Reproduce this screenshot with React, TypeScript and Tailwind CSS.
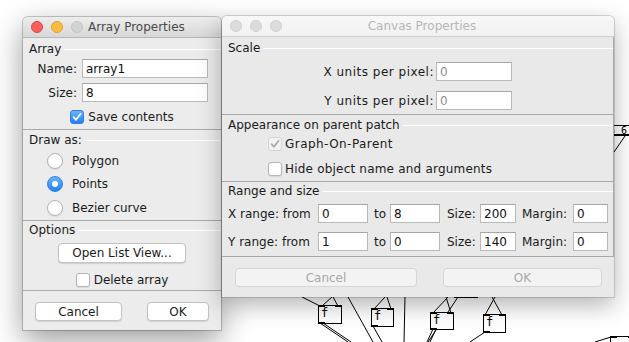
import React from "react";

const check = (color: string) => (
  <svg width="10" height="10" viewBox="0 0 10 10">
    <path d="M1.6 5.2 L4 7.8 L8.6 1.8" fill="none" stroke={color} strokeWidth="1.7" strokeLinecap="round" strokeLinejoin="round" />
  </svg>
);

function Checkbox({ state }: { state: "on" | "off" | "disabled" }) {
  if (state === "on")
    return (
      <span className="flex h-[14px] w-[14px] items-center justify-center rounded-[3px] border border-[#2f80e6] bg-gradient-to-b from-[#6ab3fb] to-[#1c7ff4]">
        {check("#ffffff")}
      </span>
    );
  if (state === "disabled")
    return (
      <span className="flex h-[14px] w-[14px] items-center justify-center rounded-[3px] border border-[#d2d2d2] bg-[#f3f3f3]">
        {check("#a9a9a9")}
      </span>
    );
  return <span className="h-[14px] w-[14px] rounded-[3px] border border-[#b4b4b4] bg-white shadow-[0_1px_1px_rgba(0,0,0,0.08)]" />;
}

function Radio({ on }: { on?: boolean }) {
  if (on)
    return (
      <span className="flex h-[16px] w-[16px] items-center justify-center rounded-full border border-[#2f80e6] bg-gradient-to-b from-[#6ab3fb] to-[#1c7ff4]">
        <span className="h-[6px] w-[6px] rounded-full bg-white" />
      </span>
    );
  return <span className="h-[16px] w-[16px] rounded-full border border-[#b4b4b4] bg-white shadow-[0_1px_1px_rgba(0,0,0,0.08)]" />;
}

function Field({ value, w, dim }: { value: string; w: string; dim?: boolean }) {
  return (
    <input
      readOnly
      value={value}
      className={`h-[19px] ${w} border border-[#b9b9b9] border-t-[#a6a6a6] bg-white pl-[3px] text-[12px] outline-none ${dim ? "text-[#8e8e8e]" : "text-[#111]"}`}
    />
  );
}

function Lights({ active }: { active?: boolean }) {
  if (active)
    return (
      <div className="flex gap-[8px]">
        <span className="h-[12px] w-[12px] rounded-full border border-[#e0443e] bg-[#fc605c]" />
        <span className="h-[12px] w-[12px] rounded-full border border-[#dea123] bg-[#fdbc40]" />
        <span className="h-[12px] w-[12px] rounded-full border border-[#c4c4c4] bg-[#d3d3d3]" />
      </div>
    );
  return (
    <div className="flex gap-[8px]">
      <span className="h-[12px] w-[12px] rounded-full border border-[#d0d0d0] bg-[#dcdcdc]" />
      <span className="h-[12px] w-[12px] rounded-full border border-[#d0d0d0] bg-[#dcdcdc]" />
      <span className="h-[12px] w-[12px] rounded-full border border-[#d0d0d0] bg-[#dcdcdc]" />
    </div>
  );
}

function Header({ label }: { label: string }) {
  return (
    <div className="flex h-[18px] items-center">
      <span className="whitespace-nowrap pl-[6px] pr-[3px] text-[12px] text-[#1b1b1b]">{label}</span>
      <div className="h-px flex-1 bg-white" />
    </div>
  );
}

function Button({ label, w, disabled }: { label: string; w: string; disabled?: boolean }) {
  return (
    <div
      className={`flex h-[19px] ${w} items-center justify-center rounded-[4px] border text-[12px] ${
        disabled
          ? "border-[#d6d6d6] bg-[#f3f3f3] text-[#a8a8a8]"
          : "border-[#c3c3c3] bg-white text-[#1b1b1b] shadow-[0_1px_1px_rgba(0,0,0,0.12)]"
      }`}
    >
      {label}
    </div>
  );
}

function ArrayWindow() {
  return (
    <div className="absolute left-[23px] top-[17px] flex h-[313px] w-[198px] flex-col rounded-t-[5px] bg-[#ececec] text-[12px] text-[#1b1b1b] shadow-[0_10px_30px_rgba(0,0,0,0.4)] ring-1 ring-black/20">
      <div className="flex h-[21px] shrink-0 items-center rounded-t-[5px] border-b border-[#b6b6b6] bg-gradient-to-b from-[#ededed] to-[#d8d8d8] pl-[8px]">
        <Lights active />
        <span className="ml-[5px] text-[12px] text-[#4a4a4a]">Array Properties</span>
      </div>

      <div className="border-b border-[#a9a9a9] pt-[2px] pb-[5px]">
        <Header label="Array" />
        <div className="mt-[1px] flex items-center">
          <span className="w-[54px] text-right">Name:</span>
          <div className="ml-[5px]">
            <Field value="array1" w="w-[126px]" />
          </div>
        </div>
        <div className="mt-[5px] flex items-center">
          <span className="w-[54px] text-right">Size:</span>
          <div className="ml-[5px]">
            <Field value="8" w="w-[126px]" />
          </div>
        </div>
        <div className="mt-[8px] flex h-[14px] items-center justify-center gap-[4px]">
          <Checkbox state="on" />
          <span>Save contents</span>
        </div>
      </div>

      <div className="border-b border-[#a9a9a9] pt-[1px] pb-[4px]">
        <Header label="Draw as:" />
        <div className="mt-[4px] flex h-[16px] items-center gap-[9px] pl-[24px]">
          <Radio />
          <span>Polygon</span>
        </div>
        <div className="mt-[7px] flex h-[16px] items-center gap-[9px] pl-[24px]">
          <Radio on />
          <span>Points</span>
        </div>
        <div className="mt-[8px] flex h-[16px] items-center gap-[9px] pl-[24px]">
          <Radio />
          <span>Bezier curve</span>
        </div>
      </div>

      <div className="border-b border-[#a9a9a9] pb-[3px]">
        <Header label="Options" />
        <div className="mt-[4px] flex justify-center">
          <div className="flex h-[20px] w-[128px] items-center justify-center rounded-[4px] border border-[#c3c3c3] bg-white shadow-[0_1px_1px_rgba(0,0,0,0.12)]">
            Open List View...
          </div>
        </div>
        <div className="mt-[10px] flex h-[14px] items-center justify-center gap-[4px]">
          <Checkbox state="off" />
          <span>Delete array</span>
        </div>
      </div>

      <div className="flex justify-between px-[12px] pt-[11px]">
        <Button label="Cancel" w="w-[87px]" />
        <Button label="OK" w="w-[62px]" />
      </div>
    </div>
  );
}

function RangeRow({ axis, from, to, size }: { axis: string; from: string; to: string; size: string }) {
  return (
    <div className="flex h-[19px] items-center whitespace-nowrap pl-[6px]">
      <span className="w-[90px]">{axis} range: from</span>
      <Field value={from} w="w-[50px]" />
      <span className="w-[22px] pl-[6px]">to</span>
      <Field value={to} w="w-[50px]" />
      <span className="w-[40px] pl-[7px]">Size:</span>
      <Field value={size} w="w-[36px]" />
      <span className="w-[57px] pl-[6px]">Margin:</span>
      <Field value="0" w="w-[35px]" />
    </div>
  );
}

function CanvasWindow() {
  return (
    <div className="absolute left-[222px] top-[16px] flex h-[281px] w-[392px] flex-col rounded-t-[5px] bg-[#e9e9e9] text-[12px] text-[#1b1b1b] shadow-[0_8px_24px_rgba(0,0,0,0.3)] ring-1 ring-black/15">
      <div className="grid h-[21px] shrink-0 grid-cols-[1fr_auto_1fr] items-center rounded-t-[5px] border-b border-[#d0d0d0] bg-gradient-to-b from-[#f8f8f8] to-[#f1f1f1] pl-[8px]">
        <Lights />
        <span className="text-[12px] text-[#b7b7b7]">Canvas Properties</span>
        <span />
      </div>

      <div className="border-b border-r border-[#a9a9a9] pt-[2px] pb-[4px]">
        <Header label="Scale" />
        <div className="mt-[5px] flex items-center pl-[98px]">
          <span className="w-[114px] text-right tracking-[0.5px]">X units per pixel:</span>
          <div className="ml-[2px]">
            <Field value="0" w="w-[76px]" dim />
          </div>
        </div>
        <div className="mt-[10px] flex items-center pl-[98px]">
          <span className="w-[114px] text-right tracking-[0.5px]">Y units per pixel:</span>
          <div className="ml-[2px]">
            <Field value="0" w="w-[76px]" dim />
          </div>
        </div>
      </div>

      <div className="border-b border-r border-[#a9a9a9] pt-[1px] pb-[5px]">
        <Header label="Appearance on parent patch" />
        <div className="mt-[3px] flex h-[14px] items-center gap-[3px] pl-[46px]">
          <Checkbox state="disabled" />
          <span className="tracking-[0.45px]">Graph-On-Parent</span>
        </div>
        <div className="mt-[11px] flex h-[14px] items-center gap-[3px] pl-[46px]">
          <Checkbox state="off" />
          <span className="tracking-[0.2px]">Hide object name and arguments</span>
        </div>
      </div>

      <div className="border-b border-r border-[#a9a9a9] pb-[5px]">
        <Header label="Range and size" />
        <div className="mt-[4px]">
          <RangeRow axis="X" from="0" to="8" size="200" />
        </div>
        <div className="mt-[9px]">
          <RangeRow axis="Y" from="1" to="0" size="140" />
        </div>
      </div>

      <div className="flex justify-between pl-[13px] pr-[12px] pt-[11px]">
        <Button label="Cancel" w="w-[182px]" disabled />
        <Button label="OK" w="w-[159px]" disabled />
      </div>
    </div>
  );
}

const boxes = [
  { x: 318, y: 305, w: 23, h: 18, t: "f" },
  { x: 371, y: 308, w: 22, h: 18, t: "f" },
  { x: 430, y: 312, w: 23, h: 17, t: "f" },
  { x: 483, y: 314, w: 22, h: 18, t: "f" },
  { x: 454, y: 280, w: 23, h: 17, t: "" },
  { x: 610, y: 336, w: 24, h: 18, t: "" },
];

const wires = [
  [302, 297, 320, 306],
  [332, 297, 322, 306],
  [333, 297, 338, 306],
  [348, 297, 373, 342],
  [385, 297, 374, 309],
  [387, 297, 391, 309],
  [405, 297, 404, 342],
  [448, 297, 433, 313],
  [446, 297, 451, 313],
  [458, 297, 428, 342],
  [495, 297, 485, 315],
  [492, 297, 502, 315],
  [320, 323, 348, 342],
  [323, 323, 351, 342],
  [373, 326, 382, 342],
  [433, 329, 427, 342],
  [436, 329, 430, 342],
  [485, 332, 470, 342],
  [595, 342, 611, 337],
  [625, 136, 614, 152],
];

function Patch() {
  return (
    <svg className="absolute inset-0" width="629" height="342" viewBox="0 0 629 342">
      {wires.map(([x1, y1, x2, y2], i) => (
        <line key={i} x1={x1} y1={y1} x2={x2} y2={y2} stroke="#000" strokeWidth="1" />
      ))}
      {boxes.map((b, i) => (
        <g key={i}>
          <rect x={b.x + 0.5} y={b.y + 0.5} width={b.w} height={b.h} fill="#fff" stroke="#000" />
          <rect x={b.x} y={b.y} width={7} height={2} fill="#000" />
          <rect x={b.x + b.w - 6} y={b.y} width={7} height={2} fill="#000" />
          <rect x={b.x} y={b.y + b.h - 1} width={7} height={2} fill="#000" />
          {b.t && (
            <text x={b.x + 3} y={b.y + 12} fontFamily="DejaVu Sans Mono, monospace" fontSize="12" fill="#000">
              {b.t}
            </text>
          )}
        </g>
      ))}
      <rect x={600.5} y={125.5} width={32} height={10} fill="#fff" stroke="#000" />
      <rect x={600} y={134} width={33} height={2} fill="#000" />
      <text x={609} y={134} fontFamily="DejaVu Sans Mono, monospace" fontSize="10" fill="#000">
        5 6
      </text>
    </svg>
  );
}

export default function App() {
  return (
    <div className="relative h-[342px] w-[629px] overflow-hidden bg-white font-['DejaVu_Sans',sans-serif]">
      <Patch />
      <ArrayWindow />
      <CanvasWindow />
    </div>
  );
}
